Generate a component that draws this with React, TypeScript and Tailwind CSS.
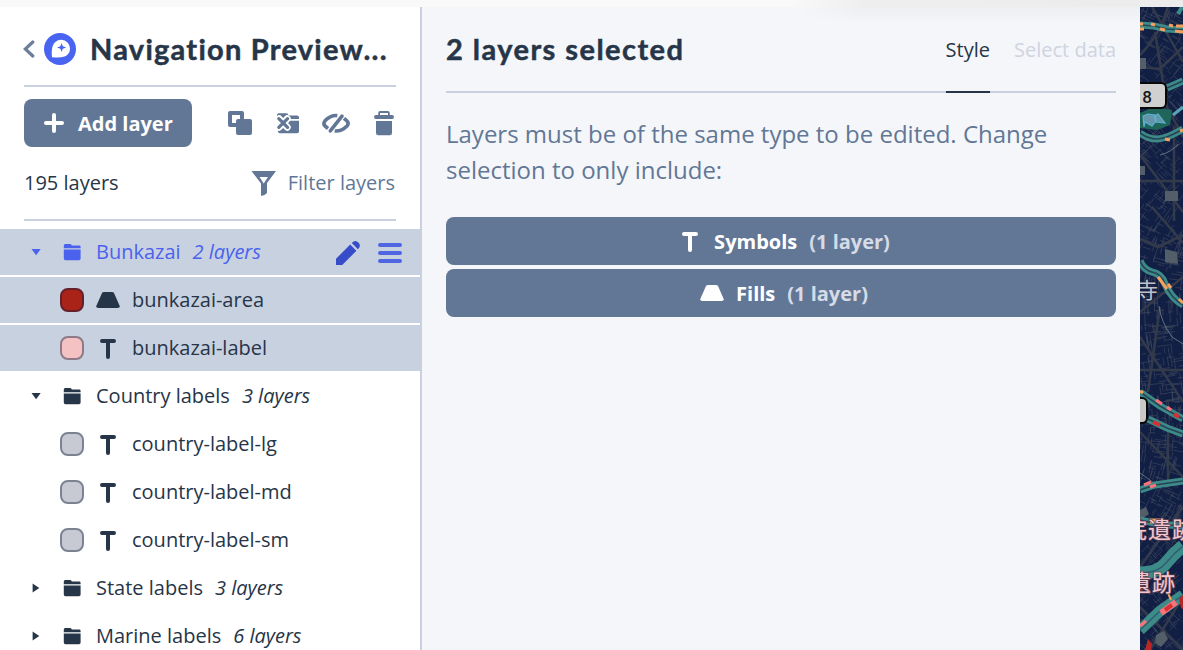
import type { ReactNode } from "react";

function Chevron({ open }: { open: boolean }) {
  return (
    <svg width="12" height="12" viewBox="0 0 12 12" fill="currentColor">
      {open ? <path d="M1.500 3h9.200L6.100 9.300z" /> : <path d="M2.600 1.500v9L9.300 6z" />}
    </svg>
  );
}

function Folder() {
  return (
    <svg width="18" height="18" viewBox="0 0 18 18" fill="currentColor">
      <path d="M.8 5.200V2.500Q.8 1 2.200 1h5q.8 0 1.200.8l.4.8h7.300q1.500 0 1.500 1.400v1.200z" />
      <path d="M.8 6.600h16.800v9q0 1.600-1.600 1.600H2.400q-1.600 0-1.600-1.600z" />
    </svg>
  );
}

function FillIcon() {
  return (
    <svg width="24" height="24" viewBox="0 0 24 24" fill="currentColor">
      <path d="M8 4h8q1.500 0 2.200 1.400l5.200 11.800q1.200 2.800-1.800 2.800H2.400q-3 0-1.800-2.800L5.800 5.400Q6.500 4 8 4z" />
    </svg>
  );
}

function SymbolIcon() {
  return (
    <svg width="24" height="24" viewBox="0 0 24 24" fill="none" stroke="currentColor" strokeWidth="4" strokeLinecap="round">
      <path d="M6 5h12M12 5v16" />
    </svg>
  );
}

function Group({ name, count, open, active, children }: { name: string; count: number; open: boolean; active?: boolean; children?: ReactNode }) {
  return (
    <>
      <div
        className={
          active
            ? "flex h-12 shrink-0 items-center border-b-2 border-white bg-[#c8d1e0] pl-[30px] text-[#4a62ee]"
            : "flex h-12 shrink-0 items-center border-b-2 border-white pl-[30px]"
        }
      >
        <Chevron open={open} />
        <span className="ml-[21px]"><Folder /></span>
        <span className="ml-[15px]">{name}</span>
        <span className="ml-3 italic">{count} layers</span>
        {active && (
          <span className="ml-auto flex items-center gap-[18px] pr-[18px]">
            <svg className="mt-[2px]" width="24" height="24" viewBox="0 0 24 24" fill="#374cc9">
              <path d="M0 24v-6.200L14.200 3.600l6.200 6.200L6.200 24z" />
              <path d="M15.800 2 17 .9Q19.800-1 22.400 1.600T23 7l-1.100 1.200z" />
            </svg>
            <svg className="mt-[2px]" width="24" height="24" viewBox="0 0 24 24" stroke="#4f66e4" strokeWidth="4" strokeLinecap="round">
              <path d="M2 4h20M2 12h20M2 20h20" />
            </svg>
          </span>
        )}
      </div>
      {children}
    </>
  );
}

function Layer({ name, kind, swatch, active }: { name: string; kind: "fill" | "symbol"; swatch: string; active?: boolean }) {
  return (
    <div
      className={
        active
          ? "flex h-12 shrink-0 items-center border-b-2 border-white bg-[#c8d1e0] pl-[60px]"
          : "flex h-12 shrink-0 items-center border-b-2 border-white pl-[60px]"
      }
    >
      <span className={`size-6 rounded-[8px] border-2 ${swatch}`} />
      <span className="ml-3">{kind === "fill" ? <FillIcon /> : <SymbolIcon />}</span>
      <span className="ml-3">{name}</span>
    </div>
  );
}

function Toolbar() {
  return (
    <div className="flex items-center text-[#627795]">
      <svg width="24" height="24" viewBox="0 0 24 24" fill="currentColor">
        <path fillRule="evenodd" d="M2 0h12q2 0 2 2v6H22q2 0 2 2v12q0 2-2 2H10q-2 0-2-2v-6H2q-2 0-2-2V2Q0 0 2 0zM4 4v8h4v-2q0-2 2-2h2V4z" />
      </svg>
      <svg className="ml-6" width="24" height="24" viewBox="0 0 24 24" fill="currentColor">
        <path d="M2 2.200h8.500q1 0 1.500 1l.5 1.200h8.500q2 0 2 2V8H1V4z" />
        <path d="M2 9.800h21v10.400q0 2-2 2H4q-2 0-2-2z" />
        <path d="m3.200 7.800 8 8.400m0-8.400-8 8.400" stroke="#fff" strokeWidth="7" strokeLinecap="round" />
        <path d="m2.800 7.600 8.800 8.800m0-8.800-8.800 8.800" stroke="currentColor" strokeWidth="3.200" strokeLinecap="round" />
      </svg>
      <svg className="ml-[22px]" width="28" height="24" viewBox="0 0 28 24" fill="none" stroke="currentColor" strokeLinecap="butt">
        <path d="M15.300 4.600Q8.500 4 3 9.800 .8 12.400 3 15L6 17.500" strokeWidth="3.600" />
        <path d="M12.700 20Q19.500 20.500 25 15q2.200-2.500 0-5L22 7.300" strokeWidth="3.600" />
        <path d="M20 5.200 8.300 19.800" strokeWidth="3.600" strokeLinecap="round" />
      </svg>
      <svg className="ml-6" width="20" height="26" viewBox="0 0 20 26" fill="currentColor">
        <path fillRule="evenodd" d="M4.200 5V3q0-2 2-2h7.600q2 0 2 2v2H18q2 0 2 2t-2 2H2Q0 9 0 7t2-2zM6 5h8V3H6z" />
        <path d="M2 11h16v12q0 2.300-2.300 2.300H4.300Q2 25.300 2 23z" />
      </svg>
    </div>
  );
}

function Sidebar() {
  const grey = "border-[#7c8292] bg-[#c8cad3]";
  return (
    <aside className="flex w-[422px] shrink-0 flex-col overflow-hidden border-r-2 border-[#c9d1e0] bg-white text-[20px] leading-[30px] text-[#273548]">
      <header className="mx-6 flex h-20 shrink-0 items-center border-b-2 border-[#c9d1e0]">
        <svg className="-ml-px mt-1.5 shrink-0" width="12" height="18" viewBox="0 0 12 18" fill="none" stroke="#6b7e9b" strokeWidth="3.200" strokeLinecap="round">
          <path d="M9.800 2 2.300 9l7.500 7" />
        </svg>
        <svg className="ml-[9px] mt-1.5 shrink-0" width="32" height="32" viewBox="0 0 32 32">
          <circle cx="16" cy="16" r="16" fill="#4a64f2" />
          <path d="M8 24.200C7.200 17.500 8 12 11.300 9a8.850 8.850 0 0 1 12.400 12.600C20.500 24.800 14.800 24.900 8 24.200z" fill="#fff" />
          <path d="m17.600 9.900 1.200 3.400 3.400 1.200-3.400 1.200-1.200 3.400-1.200-3.400-3.400-1.200 3.400-1.200z" fill="#4a64f2" />
        </svg>
        <h1 className="ml-[14px] mt-1.5 whitespace-nowrap font-['Lato'] text-[29px] font-bold tracking-[1.250px] [-webkit-text-stroke:0.500px_#273548]">Navigation Preview...</h1>
      </header>
      <div className="mx-6 mt-3 flex h-12 shrink-0 items-center justify-between pr-0.5">
        <button className="flex h-12 w-[168px] items-center rounded-lg bg-[#627795] pl-5 font-bold text-white">
          <svg width="20" height="20" viewBox="0 0 20 20" stroke="currentColor" strokeWidth="4" strokeLinecap="round">
            <path d="M2 10h16M10 2v16" />
          </svg>
          <span className="ml-[14px] mt-0.5">Add layer</span>
        </button>
        <Toolbar />
      </div>
      <div className="mx-6 flex h-[74px] shrink-0 items-center justify-between border-b-2 border-[#c9d1e0]">
        <span>195 layers</span>
        <span className="flex items-center pr-px text-[#627795]">
          <svg className="mr-3" width="25" height="26" viewBox="0 0 25 26" fill="currentColor">
            <path fillRule="evenodd" d="M.5 1H25L16 13v10q-2 2.500-6 3V13.500zM8.500 7l4.200 6.500L17 7z" />
          </svg>
          Filter layers
        </span>
      </div>
      <div className="mt-2 flex flex-col">
        <Group name="Bunkazai" count={2} open active>
          <Layer name="bunkazai-area" kind="fill" swatch="border-[#66202a] bg-[#a92319]" active />
          <Layer name="bunkazai-label" kind="symbol" swatch="border-[#8c7b87] bg-[#f5c2c3]" active />
        </Group>
        <Group name="Country labels" count={3} open>
          <Layer name="country-label-lg" kind="symbol" swatch={grey} />
          <Layer name="country-label-md" kind="symbol" swatch={grey} />
          <Layer name="country-label-sm" kind="symbol" swatch={grey} />
        </Group>
        <Group name="State labels" count={3} open={false} />
        <Group name="Marine labels" count={6} open={false} />
      </div>
    </aside>
  );
}

function SelectButton({ icon, name }: { icon: ReactNode; name: string }) {
  return (
    <button className="flex h-12 items-center justify-center rounded-lg bg-[#627795] pl-1.5 font-bold text-white">
      <span className="-mt-px">{icon}</span>
      <span className="ml-3 mt-0.5">{name}</span>
      <span className="ml-3 mt-0.5 text-[#d5dce7]">(1 layer)</span>
    </button>
  );
}

function Panel() {
  return (
    <main className="w-[718px] shrink-0 bg-[#f4f6fa] px-6 text-[20px] leading-[30px] text-[#273548]">
      <header className="flex h-[86px] items-stretch border-b-2 border-[#c9d1e0]">
        <h2 className="mr-auto mt-[27px] whitespace-nowrap font-['Lato'] text-[29px] font-bold tracking-[1.450px] [-webkit-text-stroke:0.500px_#273548]">2 layers selected</h2>
        <span className="-mb-0.5 border-b-2 border-[#273548] pt-[28px]">Style</span>
        <span className="ml-6 pt-[28px] text-[#ced4e1]">Select data</span>
      </header>
      <p className="mt-[23px] whitespace-nowrap text-[24px] leading-9 text-[#627795]">
        Layers must be of the same type to be edited. Change
        <br />
        selection to only include:
      </p>
      <div className="mt-[29px] flex flex-col gap-1">
        <SelectButton icon={<SymbolIcon />} name="Symbols" />
        <SelectButton icon={<FillIcon />} name="Fills" />
      </div>
    </main>
  );
}

const noise = (n: number) => {
  const v = Math.sin(n * 91.7) * 43758.5;
  return v - Math.floor(v);
};

// Local street blocks: the mesh turns gradually along the strip.
const streets = Array.from({ length: 950 }, (_, i) => {
  const x = noise(i) * 48 - 4;
  const y = noise(i + 1500) * 650;
  const tilt = 0.35 + Math.sin(y / 75) * 0.5 + (i % 2 ? Math.PI / 2 : 0);
  const len = 4 + noise(i + 2900) * 10;
  return `M${x.toFixed(1)} ${y.toFixed(1)}l${(Math.cos(tilt) * len).toFixed(1)} ${(Math.sin(tilt) * len).toFixed(1)}`;
}).join("");

const TRAFFIC = [
  "M0 18 14 19 27 22 43 23",
  "M27 81 43 74",
  "M0 126Q8 132 17 132T43 122",
  "M0 254Q4 263 12 265 22 267 25 277 31 291 43 298",
  "M0 385 20 399 43 412",
  "M8 412 27 421 43 427",
  "M0 483 15 478 43 474",
  "M0 513Q20 518 43 519",
];

function MapStrip() {
  return (
    <div className="w-[43px] shrink-0 overflow-hidden bg-[#10204a]">
      <svg width="43" height="643" viewBox="0 0 43 643">
        <rect width="43" height="643" fill="#121f45" />
        <path d={streets} stroke="#48505f" strokeWidth=".7" strokeOpacity=".75" fill="none" />
        <g stroke="#333b4b" strokeWidth="2.500" fill="none">
          <path d="M0 48Q20 28 28 0M0 60 20 62 43 40M15 25 27 100 43 130M0 174H43M34 120V214M0 148 43 205M12 0 43 55" />
          <path d="M0 232 18 240 43 228M0 305 43 270M12 200 43 236M0 330 43 395M20 300 8 385M0 363H43M0 425 43 470M28 420V480M0 560 43 500M10 643 43 590M0 600 43 643" />
        </g>
        <g fill="#535e68">
          <path d="M0 51h6v11H0zM0 159h5v9H0zM25 184h13v10H25zM25 242l12 3 1 12-13-2zM0 503l6-3 3 7-9 6zM16 628l8-4 4 8-7 8-6-4z" />
        </g>
        <path d="M0 106 13 100 32 103 30 118 17 123 0 121z" fill="#20655a" />
        <path d="m3 109 5-2 7 1 1 6-4 5-7-4-1 5zM14 109l4-2 7 9-9-1z" fill="#6495a8" stroke="#5ab3d1" strokeWidth="1.200" />
        <g fill="none">
          {TRAFFIC.map((d) => (
            <g key={d}>
              <path d={d} stroke="#3c8b88" strokeWidth="7" />
              <path d={d} stroke="#274457" strokeWidth="1.700" />
            </g>
          ))}
          <path d="M0 566Q18 566 26 556T43 539" stroke="#3c8b88" strokeWidth="13" />
          <path d="M0 566Q18 566 26 556T43 539" stroke="#315d70" strokeWidth="1.500" />
          <path d="M0 623 20 604 43 588" stroke="#3c8b88" strokeWidth="11" />
          <path d="M0 623 20 604 43 588" stroke="#315d70" strokeWidth="1.500" />
          <path d="M33 108 43 100" stroke="#58a4b4" strokeWidth="3" />
          <path d="M38 7 42 0" stroke="#3c8b88" strokeWidth="4" />
          <path d="M19 299Q21 315 32 330L43 337M0 466 14 476M20 148Q32 145 38 137" stroke="#718391" strokeWidth=".8" />
        </g>
        <g fill="none" stroke="#f7a05d" strokeWidth="3">
          <path d="M0 17H3M0 22H4M11 17 15 18M20 22 25 23M29 18 33 19M36 19H43M35 24 43 25M18 270 27 282M28 277 31 281M39 292 43 296M0 384 3 386M25 132 30 133M40 124 43 123" />
          <path d="M10 514h13" strokeWidth="5" />
        </g>
        <g fill="none" stroke="#fa737a" strokeWidth="3.200">
          <path d="M16 393 22 397M27 400 31 403M4 478 11 475M10 480 16 478M0 619 6 614" />
          <path d="M21 606 36 595" strokeWidth="6" />
        </g>
        <path d="M13 415 20 418M34 407 39 410M25 603 32 598" stroke="#d53134" strokeWidth="4" />
        <path d="M43 588l-4 4 2 9 2 1zM8 632l4 5-1 6H5zM0 576l4 5-4 5z" fill="#b82625" />
        <path d="m28 586 3 7" stroke="#f7a05d" strokeWidth="2" />
        <rect x="-8" y="76" width="34" height="25" rx="5" fill="#d0d0d0" stroke="#080808" strokeWidth="2" />
        <rect x="-8" y="391" width="15" height="25" rx="5" fill="#c9c9c8" stroke="#080808" strokeWidth="2" />
        <text x="2.300" y="95.500" className="font-['Roboto'] text-[17px] font-medium" fill="#17191c">8</text>
        <g className="font-['Noto_Sans_CJK_JP',sans-serif]" strokeLinejoin="round" paintOrder="stroke">
          <text x="-4" y="290.500" fontSize="22" fill="#c0c1cd" stroke="#182441" strokeWidth="2">寺</text>
          <g fontSize="23" fill="#f3c6ce" stroke="#5b4355" strokeWidth="1.500" letterSpacing="1">
            <text x="-16" y="531">院遺跡</text>
            <text x="-12" y="584">遺跡</text>
          </g>
        </g>
      </svg>
    </div>
  );
}

export default function App() {
  return (
    <div className="relative flex h-[650px] w-[1183px] flex-col overflow-hidden bg-white font-['Open_Sans',sans-serif]">
      <div className="flex h-[7px] shrink-0 bg-[#f9f9f9]">
        <div className="ml-[790px] flex-1 bg-linear-to-r from-[#f9f9f9] via-[#eeeeef] via-20% to-[#ececed]" />
      </div>
      <div className="flex min-h-0 flex-1">
        <Sidebar />
        <Panel />
        <MapStrip />
      </div>
      <div className="pointer-events-none absolute left-[800px] top-[7px] h-4 w-[340px] bg-linear-to-b from-black/3 to-transparent [mask-image:linear-gradient(to_right,transparent,black_60px)]" />
    </div>
  );
}
